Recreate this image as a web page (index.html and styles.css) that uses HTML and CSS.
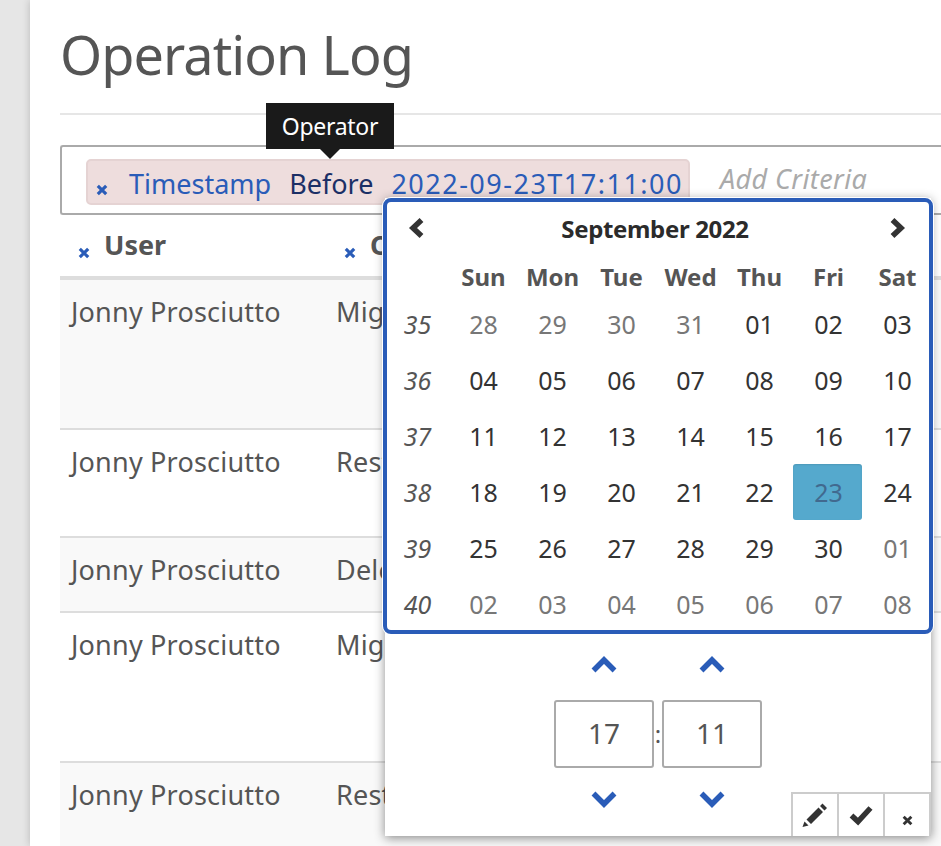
FILE: index.html
```html
<!DOCTYPE html>
<html lang="en">
<head>
<meta charset="utf-8">
<title>Operation Log</title>
<link rel="stylesheet" href="styles.css">
</head>
<body>
<main class="sheet">
  <h1 class="title">Operation Log</h1>
  <section class="filter">
    <div class="chip">
      <span class="x x-chip"><svg viewBox="0 0 10 10"><path d="M1.5 1.5l7 7M8.5 1.5l-7 7"/></svg></span>
      <a class="crit">Timestamp</a>
      <span class="op">Before</span>
      <a class="crit date">2022-09-23T17:11:00</a>
    </div>
    <span class="add">Add Criteria</span>
    <div class="tip">Operator</div>
  </section>
  <div class="table">
    <div class="row head">
      <div class="cell user"><span class="x"><svg viewBox="0 0 10 10"><path d="M1.5 1.5l7 7M8.5 1.5l-7 7"/></svg></span>User</div>
      <div class="cell oper"><span class="x"><svg viewBox="0 0 10 10"><path d="M1.5 1.5l7 7M8.5 1.5l-7 7"/></svg></span>Operation</div>
    </div>
    <div class="row r1 alt"><div class="cell user">Jonny Prosciutto</div><div class="cell oper">Migrate</div></div>
    <div class="row r2"><div class="cell user">Jonny Prosciutto</div><div class="cell oper">Restore</div></div>
    <div class="row r3 alt"><div class="cell user">Jonny Prosciutto</div><div class="cell oper">Delete</div></div>
    <div class="row r4"><div class="cell user">Jonny Prosciutto</div><div class="cell oper">Migrate</div></div>
    <div class="row r5 alt"><div class="cell user">Jonny Prosciutto</div><div class="cell oper">Restore</div></div>
  </div>
</main>

<div class="picker">
  <div class="cal">
    <div class="cal-head">
      <svg class="nav" viewBox="0 0 16 22"><path d="M13.500 3L5 11l8.500 8"/></svg>
      <b class="month">September 2022</b>
      <svg class="nav" viewBox="0 0 16 22"><path d="M2.500 3L11 11l-8.500 8"/></svg>
    </div>
    <div class="grid">
      <span></span><b>Sun</b><b>Mon</b><b>Tue</b><b>Wed</b><b>Thu</b><b>Fri</b><b>Sat</b>
      <i>35</i><s>28</s><s>29</s><s>30</s><s>31</s><span>01</span><span>02</span><span>03</span>
      <i>36</i><span>04</span><span>05</span><span>06</span><span>07</span><span>08</span><span>09</span><span>10</span>
      <i>37</i><span>11</span><span>12</span><span>13</span><span>14</span><span>15</span><span>16</span><span>17</span>
      <i>38</i><span>18</span><span>19</span><span>20</span><span>21</span><span>22</span><span class="sel">23</span><span>24</span>
      <i>39</i><span>25</span><span>26</span><span>27</span><span>28</span><span>29</span><span>30</span><s>01</s>
      <i>40</i><s>02</s><s>03</s><s>04</s><s>05</s><s>06</s><s>07</s><s>08</s>
    </div>
  </div>
  <div class="time">
    <div class="tcol">
      <svg class="chev" viewBox="0 0 26 18"><path d="M2.500 14.500L13 4l10.500 10.500"/></svg>
      <div class="tbox">17</div>
      <svg class="chev" viewBox="0 0 26 18"><path d="M2.500 3.500L13 14 23.500 3.500"/></svg>
    </div>
    <span class="colon">:</span>
    <div class="tcol">
      <svg class="chev" viewBox="0 0 26 18"><path d="M2.500 14.500L13 4l10.500 10.500"/></svg>
      <div class="tbox">11</div>
      <svg class="chev" viewBox="0 0 26 18"><path d="M2.500 3.500L13 14 23.500 3.500"/></svg>
    </div>
  </div>
  <div class="tools">
    <span class="tool"><svg viewBox="0 0 26 26"><path class="fill" d="M.5 25l2-5.500 4 4zM4.500 17.500l12-12L21 10 9 22zM18 4l2.500-2.500L25 6l-2.500 2.500z"/></svg></span>
    <span class="tool"><svg viewBox="0 0 26 26"><path class="stroke" d="M3.500 13.500l6.500 6L22.500 6"/></svg></span>
    <span class="tool small"><svg viewBox="0 0 10 10"><path d="M1.500 1.500l7 7M8.500 1.500l-7 7"/></svg></span>
  </div>
</div>
</body>
</html>
```
FILE: styles.css
```css
* { box-sizing: border-box; }
html, body { margin: 0; height: 846px; overflow: hidden; }
body { background: #e6e6e6; font-family: "Noto Sans", "Open Sans", sans-serif; color: #555; }
.sheet { margin-left: 30px; height: 846px; background: #fff; padding: 0 0 0 30px; box-shadow: 0 0 8px rgba(0,0,0,.2); overflow: hidden; }
.title { margin: 0; height: 115px; padding-top: 21px; font-size: 54px; letter-spacing: -.93px; line-height: 66px; font-weight: 400; color: #555; border-bottom: 2px solid #e6e6e6; }
.filter { position: relative; margin-top: 30px; height: 70px; border: 2px solid #aaa; border-right: 0; border-radius: 3px 0 0 3px; display: flex; align-items: center; gap: 30px; padding: 0 0 0 24px; }
.chip { display: flex; align-items: center; flex: none; width: 604px; height: 46px; margin-top: 3px; background: #eedddd; border: 2px solid #e5d3d3; border-radius: 5px; white-space: nowrap; font-size: 27px; padding: 4px 0 0 8px; }
.crit { color: #2a5cb8; }
.date { letter-spacing: 1.5px; }
.op { color: #1b2f66; margin: 0 18px; }
.x { display: inline-flex; }
.x svg { width: 12px; height: 12px; fill: none; stroke: #2a5cb8; stroke-width: 2.6; }
.x-chip { margin: 12px 21px 0 0; }
.add { font-style: italic; color: #aaa; font-size: 27px; letter-spacing: .4px; margin-top: -4px; white-space: nowrap; }
.tip { position: absolute; left: 204px; top: -44px; width: 128px; height: 46px; background: #1a1a1a; color: #fff; font-size: 23px; letter-spacing: -.3px; display: flex; align-items: center; justify-content: center; }
.tip::after { content: ""; position: absolute; left: 54px; top: 46px; border: 10px solid transparent; border-top-color: #1a1a1a; border-bottom: 0; }
.table { margin-top: 12px; }
.row { display: flex; font-size: 27px; letter-spacing: .2px; line-height: 36px; border-bottom: 2px solid #ddd; align-items: flex-start; padding-top: 14px; }
.alt { background: #f9f9f9; }
.head { height: 53px; padding: 0 0 14px; border-bottom: 4px solid #ddd; font-weight: 700; letter-spacing: 0; align-items: center; }
.cell { white-space: nowrap; }
.user { width: 266px; padding-left: 11px; flex: none; }
.oper { padding-left: 10px; }
.head .user, .head .oper { padding-left: 18px; }
.head .x { margin-right: 14px; position: relative; top: 4px; }
.r1 { height: 150px; }
.r2 { height: 108px; }
.r3 { height: 75px; }
.r4 { height: 150px; }
.r5 { height: 90px; }
.picker { position: absolute; left: 385px; top: 198px; width: 546px; height: 638px; background: #fff; box-shadow: 0 2px 10px rgba(0,0,0,.45); }
.cal { height: 436px; margin: 0 -2px; border: 4px solid #2a5cb8; border-radius: 8px; background: #fff; box-shadow: 0 0 0 1px #fff; }
.cal-head { display: flex; justify-content: space-between; align-items: center; height: 58px; padding: 0 23px 6px 21px; color: #2b2b2b; }
.month { font-size: 24px; letter-spacing: -.35px; margin-right: 4px; }
.nav { width: 16px; height: 22px; fill: none; stroke: #333; stroke-width: 5.5; }
.grid { display: grid; grid-template-columns: 61px repeat(7, 69px); grid-template-rows: 36px repeat(6, 56px); font-size: 25px; color: #333; text-align: center; }
.grid > * { display: flex; align-items: center; justify-content: center; text-decoration: none; padding-left: 2px; }
.grid b { color: #555; font-size: 24px; padding-bottom: 4px; }
.grid s { color: #777; }
.grid i { color: #555; padding-left: 0; }
.grid .sel { background: #55a9cd; border-radius: 3px; color: #41698f; box-shadow: inset 0 1px 2px rgba(0,0,0,.1); }
.time { display: flex; margin-left: 169px; align-items: flex-start; }
.tcol { width: 100px; display: flex; flex-direction: column; align-items: center; }
.tcol .chev { width: 26px; height: 18px; margin-top: 22px; fill: none; stroke: #2a5cb8; stroke-width: 5.5; flex: none; }
.tbox { width: 100px; height: 68px; margin-top: 26px; padding-bottom: 2px; border: 2px solid #aaa; border-radius: 3px; font-size: 28px; display: flex; align-items: center; justify-content: center; color: #555; }
.colon { width: 8px; margin-top: 83px; font-size: 24px; line-height: 34px; text-align: center; }
.tools { position: absolute; right: 0; bottom: 0; display: flex; border: 2px solid #ccc; border-bottom: 0; }
.tool { width: 46px; height: 42px; display: flex; align-items: center; justify-content: center; }
.tool:first-child { width: 44px; }
.tool + .tool { border-left: 2px solid #ccc; }
.tool svg { width: 26px; height: 26px; }
.tool .fill { fill: #333; }
.tool .stroke { fill: none; stroke: #333; stroke-width: 5.5; }
.tool.small svg { width: 11px; height: 11px; fill: none; stroke: #333; stroke-width: 2.6; margin-top: 10px; }
```
